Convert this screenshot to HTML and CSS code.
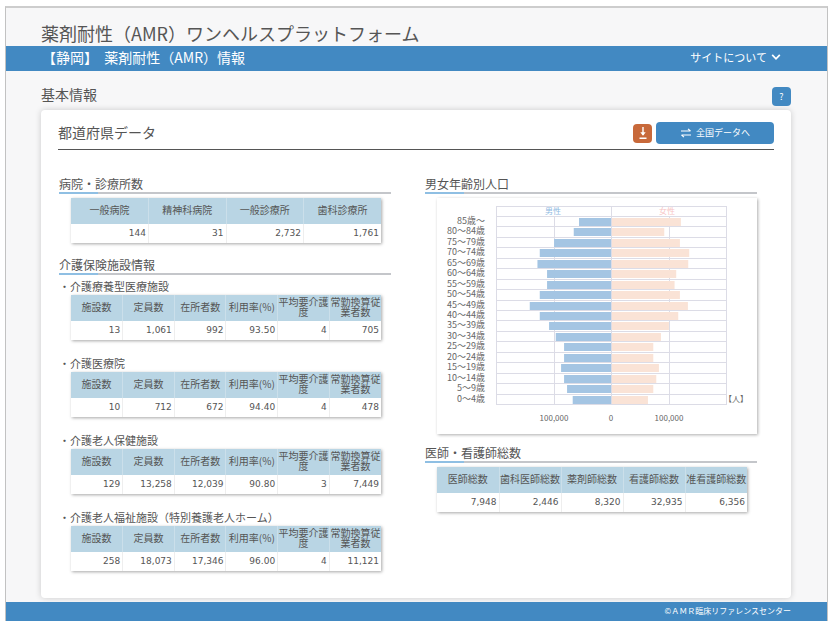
FILE: index.html
```
<!DOCTYPE html>
<html lang="ja">
<head>
  <meta charset="UTF-8">
  <meta name="viewport" content="width=device-width,initial-scale=1">
  <title>薬剤耐性（AMR）ワンヘルスプラットフォーム</title>
  <link rel="stylesheet" href="styles.css">
</head>
<body>
  <div class="page">
    <header class="site-header">
      <h1 class="site-title">薬剤耐性（AMR）ワンヘルスプラットフォーム</h1>
    </header>
    <nav class="navbar">
      <span class="nav-title">【静岡】&nbsp; 薬剤耐性（AMR）情報</span>
      <button type="button" class="nav-menu">サイトについて
        <svg viewBox="0 0 10 8" width="10" height="8" fill="none"><path d="M1.2 1.8L5 5.8L8.8 1.8" stroke="#fff" stroke-width="1.7"/></svg>
      </button>
    </nav>
    <main class="container">
      <div class="page-head">
        <h2 class="page-title">基本情報</h2>
        <button type="button" class="icon-btn" title="ヘルプ">?</button>
      </div>
      <div class="card">
        <div class="card-head">
          <h3 class="card-title">都道府県データ</h3>
          <div class="actions">
            <button type="button" class="icon-btn download" title="ダウンロード">
              <svg viewBox="0 0 12 14" width="12" height="14" fill="none"><path d="M6 1v8M2.5 12.3h7" stroke="#fff" stroke-width="1.4"/><path d="M3.3 6.2h5.4L6 9.8z" fill="#fff"/></svg>
            </button>
            <button type="button" class="switch-btn">
              <svg viewBox="0 0 12 10" width="12" height="10" fill="none"><path d="M1 3h9.5M8 .8l2.5 2.2M11 7H1.5M4 9.2L1.5 7" stroke="#fff" stroke-width="1.1"/></svg>
              全国データへ
            </button>
          </div>
        </div>
        <div class="columns">
          <div class="column">
            <section>
              <h4 class="section-title">病院・診療所数</h4>
              <table class="data-table">
                <thead><tr><th>一般病院</th><th>精神科病院</th><th>一般診療所</th><th>歯科診療所</th></tr></thead>
                <tbody><tr><td>144</td><td>31</td><td>2,732</td><td>1,761</td></tr></tbody>
              </table>
            </section>
            <section>
              <h4 class="section-title">介護保険施設情報</h4>
              <div class="facility">
                <h5 class="facility-title">・介護療養型医療施設</h5>
                <table class="data-table">
                  <thead><tr><th>施設数</th><th>定員数</th><th>在所者数</th><th>利用率(%)</th><th>平均要介護度</th><th>常勤換算従業者数</th></tr></thead>
                  <tbody><tr><td>13</td><td>1,061</td><td>992</td><td>93.50</td><td>4</td><td>705</td></tr></tbody>
                </table>
              </div>
              <div class="facility">
                <h5 class="facility-title">・介護医療院</h5>
                <table class="data-table">
                  <thead><tr><th>施設数</th><th>定員数</th><th>在所者数</th><th>利用率(%)</th><th>平均要介護度</th><th>常勤換算従業者数</th></tr></thead>
                  <tbody><tr><td>10</td><td>712</td><td>672</td><td>94.40</td><td>4</td><td>478</td></tr></tbody>
                </table>
              </div>
              <div class="facility">
                <h5 class="facility-title">・介護老人保健施設</h5>
                <table class="data-table">
                  <thead><tr><th>施設数</th><th>定員数</th><th>在所者数</th><th>利用率(%)</th><th>平均要介護度</th><th>常勤換算従業者数</th></tr></thead>
                  <tbody><tr><td>129</td><td>13,258</td><td>12,039</td><td>90.80</td><td>3</td><td>7,449</td></tr></tbody>
                </table>
              </div>
              <div class="facility">
                <h5 class="facility-title">・介護老人福祉施設（特別養護老人ホーム）</h5>
                <table class="data-table">
                  <thead><tr><th>施設数</th><th>定員数</th><th>在所者数</th><th>利用率(%)</th><th>平均要介護度</th><th>常勤換算従業者数</th></tr></thead>
                  <tbody><tr><td>258</td><td>18,073</td><td>17,346</td><td>96.00</td><td>4</td><td>11,121</td></tr></tbody>
                </table>
              </div>
            </section>
          </div>
          <div class="column column-right">
            <section>
              <h4 class="section-title">男女年齢別人口</h4>
              <div class="chart-box">
                <svg id="pyramid" class="chart" viewBox="0 0 320 236" role="img" aria-label="男女年齢別人口"></svg>
              </div>
            </section>
            <section>
              <h4 class="section-title">医師・看護師総数</h4>
              <table class="data-table">
                <thead><tr><th>医師総数</th><th>歯科医師総数</th><th>薬剤師総数</th><th>看護師総数</th><th>准看護師総数</th></tr></thead>
                <tbody><tr><td>7,948</td><td>2,446</td><td>8,320</td><td>32,935</td><td>6,356</td></tr></tbody>
              </table>
            </section>
          </div>
        </div>
      </div>
    </main>
    <footer class="footer">©ＡＭＲ臨床リファレンスセンター</footer>
  </div>
  <script src="script.js"></script>
</body>
</html>
```

FILE: styles.css
```
:root {
  --blue: #4289c2;
  --th: #b9d5e4;
  --text: #555;
  --line: #c4c6ca;
}
* { box-sizing: border-box; }
body {
  margin: 0;
  font-family: "Noto Sans CJK JP", sans-serif;
  color: var(--text);
  background: #fff;
}
h1, h2, h3, h4, h5 { margin: 0; font-weight: 400; }
button {
  border: none; padding: 0; margin: 0;
  font-family: inherit; color: #fff; cursor: pointer;
  display: flex; align-items: center; justify-content: center;
}
.page {
  margin: 6px 12px 8px 5px;
  border: 1px solid #c2c2c2;
  border-top: 2px solid #cdcdcd;
  border-bottom: none;
  background: #f7f7f8;
}
.site-header { padding: 12px 35px 0; }
.site-title { font-size: 18px; line-height: 26px; }
.navbar {
  display: flex; align-items: center; justify-content: space-between;
  height: 25px; padding: 0 46px 4px 36px;
  background: var(--blue); color: #fff;
}
.nav-title { font-size: 14px; line-height: 20px; }
.nav-menu { font-size: 11px; line-height: 20px; gap: 4px; background: none; }

.container { padding: 14px 36px 4px 35px; }
.page-head {
  display: flex; justify-content: space-between;
  height: 25px;
}
.page-title { font-size: 14px; line-height: 18px; }
.page-head .icon-btn { margin-top: 2px; }
.icon-btn {
  width: 19px; height: 19px; border-radius: 4px;
  font-size: 9px; line-height: 19px; background: var(--blue);
}
.icon-btn.download { background: #c8693a; }
.card {
  background: #fff;
  border-radius: 4px;
  box-shadow: 0 0 6px #0000002e;
  padding: 12px 17px 27px;
}
.card-head {
  display: flex; align-items: center; justify-content: space-between;
  height: 28px; padding-bottom: 5px;
  border-bottom: 1px solid #555;
}
.card-title { font-size: 14px; line-height: 20px; padding-bottom: 2px; }
.actions { display: flex; align-items: center; gap: 4px; }
.switch-btn {
  width: 118px; height: 22px; gap: 4px;
  border-radius: 4px; background: var(--blue);
  font-size: 9px; line-height: 20px;
}

.columns {
  display: grid; grid-template-columns: 1fr 1fr; gap: 34px;
  padding: 26px 17px 0 1px;
}
.column { display: flex; flex-direction: column; gap: 14px; }
.column-right { gap: 11px; }
.section-title {
  position: relative;
  font-size: 12px; line-height: 16px;
  border-bottom: 2px solid var(--line);
}
.section-title::after {
  content: ""; position: absolute; left: 0; bottom: -2px;
  width: 39px; height: 2px; background: #8fbfe3;
}
.data-table {
  width: calc(100% - 22px); margin: 4px 10px 0 12px;
  table-layout: fixed; border-collapse: collapse;
  box-shadow: 1px 1px 3px #00000059;
}
.data-table th {
  height: 26px; padding: 0 0 2px;
  font-size: 10px; line-height: 10px; font-weight: 400;
  background: var(--th);
  border-right: 1px solid #cbdfea;
}
.data-table td {
  height: 19px; padding: 0 2px 2px 0;
  font-family: "DejaVu Sans", sans-serif;
  font-size: 9px; line-height: 12px; text-align: right;
  border-right: 1px solid #eee;
}
.data-table th:last-child, .data-table td:last-child { border-right: none; }
.facility { margin-bottom: 15px; }
.facility:last-child { margin-bottom: 0; }
.facility-title { font-size: 11px; line-height: 16px; padding: 3px 0 1px; }
.facility .data-table { margin-top: 0; }
.facility + .facility .facility-title { padding-top: 0; }

.chart-box { margin: 4px 0 0 12px; box-shadow: 1px 1px 3px #00000052; }
.chart { display: block; width: 100%; }
.chart text { font-size: 9px; fill: #666; }
.chart .unit { font-size: 8px; }
.chart .axis { font-size: 8px; text-anchor: middle; }
.chart .male-label { font-size: 8px; fill: #8fbbe2; text-anchor: middle; }
.chart .female-label { font-size: 8px; fill: #f7c5c5; text-anchor: middle; }
.chart .age { text-anchor: end; }
.chart .grid { stroke: #dcdce6; fill: none; }
.chart .male { fill: #a4c5e3; }
.chart .female { fill: #fae3d6; }

.footer {
  height: 19px; padding: 0 36px;
  font-size: 8px; line-height: 18px; text-align: right;
  background: var(--blue); color: #fff;
}
```

FILE: script.js
```
// [age, male, female] in persons
const population = [
  ["85歳～", 55600, 119800],
  ["80～84歳", 64800, 90900],
  ["75～79歳", 99000, 118100],
  ["70～74歳", 123900, 134300],
  ["65～69歳", 127900, 132600],
  ["60～64歳", 111200, 111700],
  ["55～59歳", 111200, 108800],
  ["50～54歳", 123900, 118100],
  ["45～49歳", 141300, 132000],
  ["40～44歳", 123900, 115200],
  ["35～39歳", 107700, 99000],
  ["30～34歳", 96100, 85100],
  ["25～29歳", 81600, 71800],
  ["20～24歳", 81600, 71800],
  ["15～19歳", 86800, 81600],
  ["10～14歳", 81600, 77000],
  ["5～9歳", 76400, 71800],
  ["0～4歳", 66600, 62500]
];

const left = 59, right = 289, center = 174;
const top0 = 8, firstRow = 18, bottom = 206;
const rowH = (bottom - firstRow) / population.length;
const unit = 57.5 / 100000;

let out = `<rect class="grid" x="${left + 0.5}" y="${top0 + 0.5}" width="${right - left}" height="${bottom - top0}"/>`;
[center - 57, center, center + 58].forEach(x => {
  const y = x === center ? top0 : firstRow;
  out += `<path class="grid" d="M${x + 0.5} ${y}V${bottom}"/>`;
});

population.forEach(([age, male, female], i) => {
  const y = Math.round(firstRow + i * rowH);
  out += `<path class="grid" d="M${left} ${y + 0.5}H${right}"/>`;
  out += `<rect class="male" x="${center - male * unit}" y="${y + 2}" width="${male * unit}" height="8"/>`;
  out += `<rect class="female" x="${center + 1}" y="${y + 2}" width="${female * unit}" height="8"/>`;
  out += `<text class="age" x="48" y="${y + 8}">${age}</text>`;
});

out += `<text class="male-label" x="116" y="16">男性</text>`;
out += `<text class="female-label" x="230" y="16">女性</text>`;
out += `<text class="axis" x="117" y="223">100,000</text>`;
out += `<text class="axis" x="174" y="223">0</text>`;
out += `<text class="axis" x="232" y="223">100,000</text>`;
out += `<text class="unit" x="287" y="204">【人】</text>`;
document.getElementById("pyramid").innerHTML = out;
```
